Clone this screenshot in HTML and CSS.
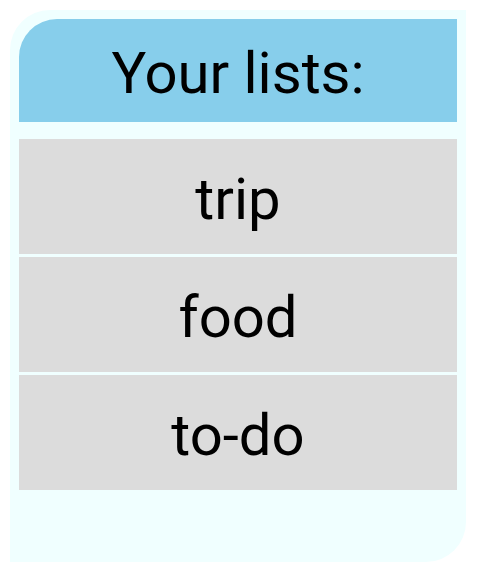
FILE: index.html
```html
<!DOCTYPE html>
<html>
<head>
<meta charset="utf-8">
<link rel="stylesheet" href="styles.css">
</head>
<body>
<div class="card">
  <div class="header">Your lists:</div>
  <div class="lists">
    <div class="row">trip</div>
    <div class="row">food</div>
    <div class="row">to-do</div>
  </div>
</div>
</body>
</html>
```
FILE: styles.css
```css
html, body {
  margin: 0;
  padding: 0;
  background: #ffffff;
}
body {
  font-family: Roboto, "Noto Sans", sans-serif;
  color: #000;
}
.card {
  box-sizing: border-box;
  margin: 10px 0 0 10px;
  width: 456px;
  height: 552px;
  padding: 9px 9px 0 9px;
  background: #F0FFFF;
  border-radius: 40px 0 40px 0;
  display: flex;
  flex-direction: column;
}
.header {
  box-sizing: border-box;
  height: 103px;
  padding-top: 5px;
  background: #87CEEB;
  border-top-left-radius: 38px;
  display: flex;
  align-items: center;
  justify-content: center;
  font-size: 58px;
}
.lists {
  margin-top: 17px;
  display: flex;
  flex-direction: column;
  gap: 3px;
}
.row {
  box-sizing: border-box;
  height: 115px;
  padding-top: 5px;
  background: #DCDCDC;
  display: flex;
  align-items: center;
  justify-content: center;
  font-size: 58px;
}
```
